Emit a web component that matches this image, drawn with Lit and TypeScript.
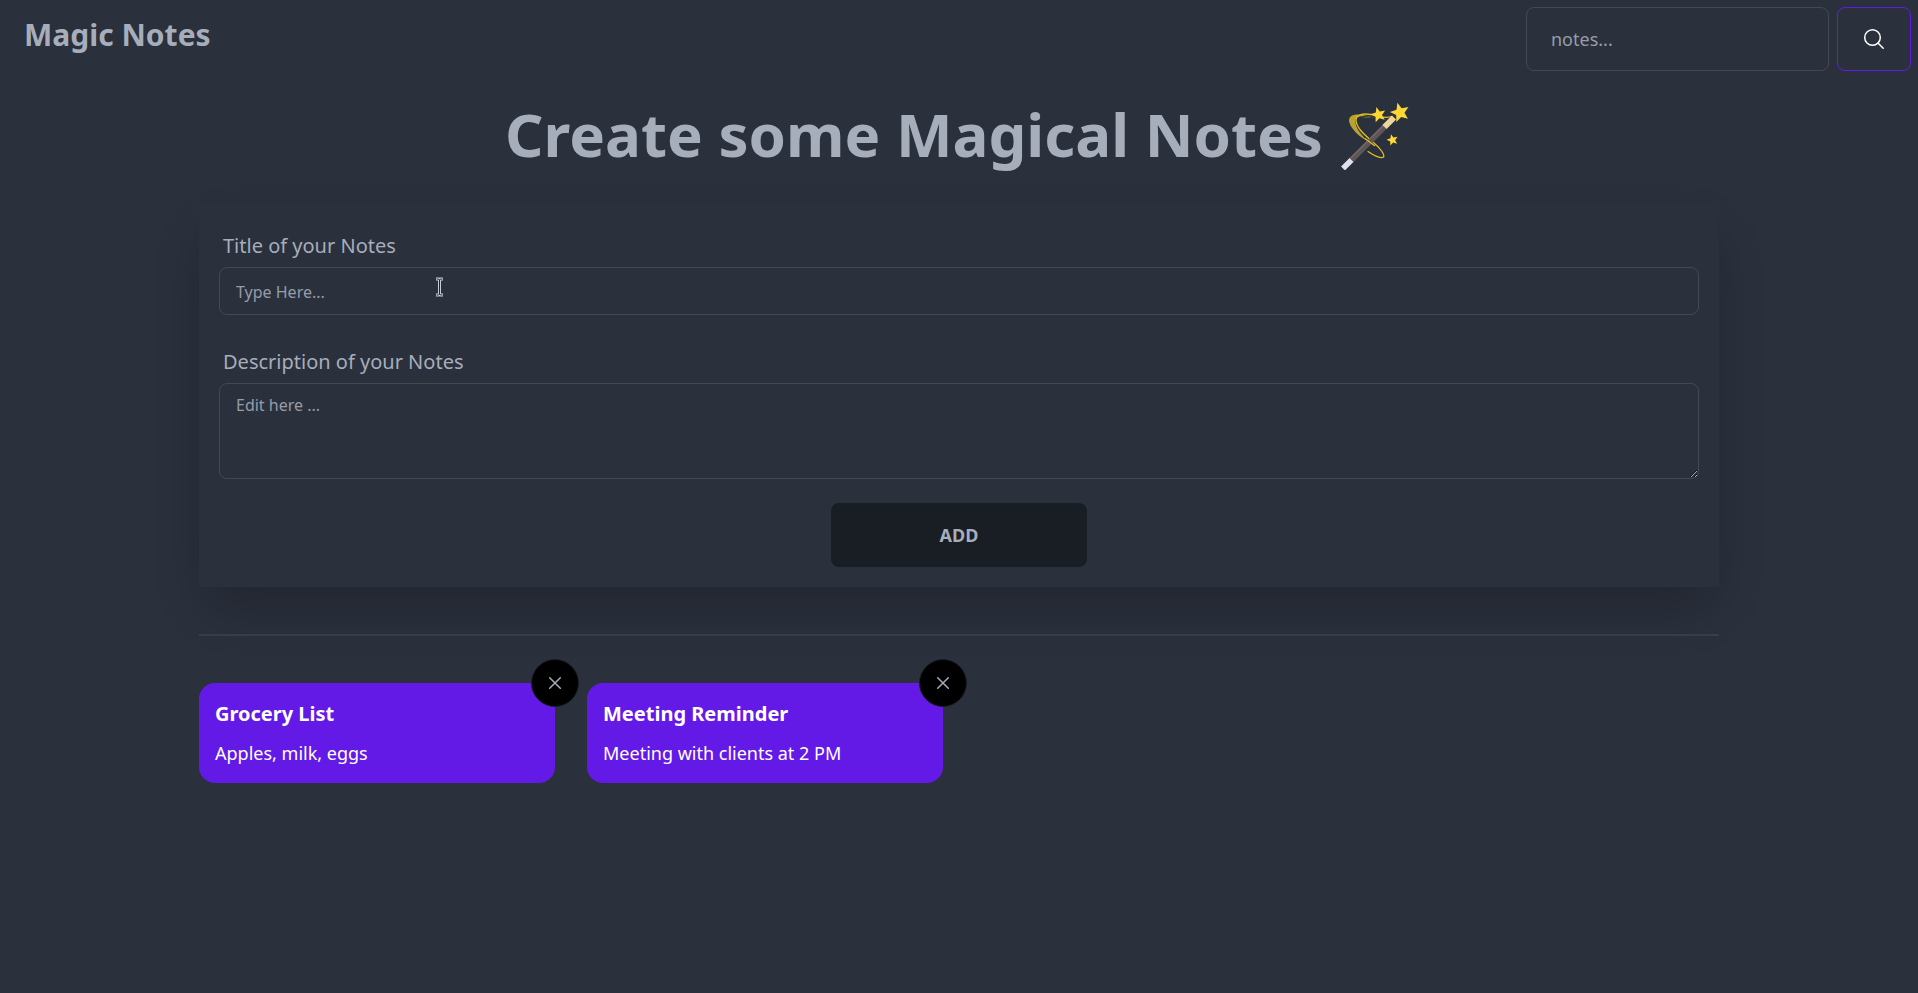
import { LitElement, html, css, svg } from "lit";
import { customElement, property, state } from "lit/decorators.js";

interface Note {
  title: string;
  body: string;
}

const star = "M-3.1-8.500L1.100-3.800L7.100-5.500L4-.1L7.500 5L1.400 3.800L-2.500 8.700L-3.200 2.500L-9 .3L-3.300-2.200Z";

const wand = html`
  <svg class="wand" viewBox="4 0 74 72" fill="none" role="img" aria-label="Magic wand">
    <path d="M40 20C32 20 25 18 22 20C18 23 23 33 33 43C25 40 15 30 14 23C14 15 24 15 40 20Z" fill="#b9a32f" />
    <path d="M41 21C31 17 22 18 21 22C20 30 27 37 34 44" stroke="#2a303c" stroke-width="1" />
    <path d="M57 18.500C49 21 45 18 36 16.500C27 15 21 17 21 22C21 30 31 38 39 45C46 51 50 57 48.500 59C46 61 38 57 33 53.500" stroke="#e2bd25" stroke-width="1.300" stroke-linecap="round" />
    <path d="M8 70.500L17 61.500" stroke="#dfe1ee" stroke-width="5.500" />
    <path d="M16.500 62L50 28.500" stroke="#5d5654" stroke-width="5.500" />
    <path d="M15.800 60L49 27" stroke="#746b66" stroke-width="1.200" />
    <path d="M49.500 29L59 19.500" stroke="#ecd69b" stroke-width="6" />
    <path d="M30 40.500L40 48" stroke="#e2bd25" stroke-width="1.200" />
    ${[
      [65, 14.5, 1.12],
      [43.5, 16.8, 0.88],
      [57.5, 42, 0.66],
    ].map(([x, y, k]) => svg`<path d=${star} fill="#fdd835" transform="translate(${x} ${y}) rotate(5) scale(${k})" />`)}
  </svg>
`;

@customElement("note-card")
export class NoteCard extends LitElement {
  @property() heading = "";
  @property() body = "";

  static styles = css`
    :host { display: block; position: relative; }
    .card { background: #641ae6; color: #fff; border-radius: 16px; padding: 16px; display: grid; gap: 10px; }
    .title { margin: 0; font-size: 20px; line-height: 30px; font-weight: 700; }
    .text { margin: 0; font-size: 18px; line-height: 28px; }
    .close {
      position: absolute; top: 0; right: 0; transform: translate(50%, -50%);
      box-sizing: border-box; width: 48px; height: 48px; padding: 0;
      display: grid; place-items: center; border-radius: 50%;
      border: 1px solid #191d24; background: #000; color: #a6adbb; cursor: pointer;
    }
    .x { width: 14px; height: 14px; }
  `;

  private remove() {
    this.dispatchEvent(new CustomEvent("remove"));
  }

  render() {
    return html`
      <article class="card">
        <h2 class="title">${this.heading}</h2>
        <p class="text">${this.body}</p>
      </article>
      <button class="close" type="button" aria-label="Delete note" @click=${this.remove}>
        <svg class="x" viewBox="0 0 14 14" fill="none" stroke="currentColor" stroke-width="1.500" stroke-linecap="round">
          <path d="M1.700 1.700l10.600 10.600M12.300 1.700l-10.600 10.600" />
        </svg>
      </button>
    `;
  }
}

@customElement("app-root")
export class AppRoot extends LitElement {
  @state() private notes: Note[] = [
    { title: "Grocery List", body: "Apples, milk, eggs" },
    { title: "Meeting Reminder", body: "Meeting with clients at 2 PM" },
  ];

  static styles = css`
    :host {
      display: block; min-height: 100vh; background: #2a303c; color: #a6adbb;
      font-family: "Noto Sans", sans-serif; font-size: 16px; line-height: 24px;
    }
    .nav { display: flex; justify-content: space-between; padding: 7px; }
    .brand { margin: 10px 17px; font-size: 30px; line-height: 36px; font-weight: 700; }
    .search { display: flex; gap: 8px; }
    input, textarea, button { font: inherit; color: inherit; box-sizing: border-box; }
    .field { display: block; width: 100%; margin: 0; background: transparent; border: 1px solid #434852; border-radius: 8px; }
    .field::placeholder { color: #969da9; opacity: 1; }
    .query { width: 303px; height: 64px; padding: 0 24px; font-size: 18px; line-height: 28px; }
    .go {
      height: 64px; padding: 0 24px; border: 1px solid #641ae6; border-radius: 8px;
      background: transparent; color: #fff; display: grid; place-items: center; cursor: pointer;
    }
    .lens { width: 24px; height: 24px; }
    .hero {
      height: 60px; margin: 26px 8px 39px; display: flex; justify-content: center; align-items: center; gap: 16px;
      font-size: 60px; line-height: 60px; font-weight: 700;
    }
    .wand { width: 74px; height: 72px; flex: none; }
    .page { max-width: 1520px; margin: 0 auto; padding: 0 8px; }
    .form { padding: 20px; box-shadow: 0 25px 50px -12px rgba(0, 0, 0, 0.25); display: flex; flex-direction: column; gap: 24px; }
    .label { display: block; padding: 8px 4px 6px; font-size: 20px; line-height: 30px; }
    .control { position: relative; }
    .title { height: 48px; padding: 1px 16px 0; }
    .pointer { position: absolute; left: 216px; top: 10px; width: 9px; height: 20px; pointer-events: none; }
    .desc { height: 96px; padding: 9px 16px 8px; resize: vertical; }
    .add {
      align-self: center; width: 256px; height: 64px; border: 0; border-radius: 8px;
      background: #191d24; font-size: 18px; font-weight: 700; cursor: pointer;
    }
    .rule { height: 2px; border: 0; margin: 47px 0; background: #373d49; }
    .notes { display: grid; grid-template-columns: repeat(4, minmax(0, 1fr)); gap: 32px; }
  `;

  private add(e: Event) {
    e.preventDefault();
    const form = e.target as HTMLFormElement;
    const data = new FormData(form);
    this.notes = [...this.notes, { title: String(data.get("title")), body: String(data.get("desc")) }];
    form.reset();
  }

  private remove(note: Note) {
    this.notes = this.notes.filter((n) => n !== note);
  }

  render() {
    return html`
      <header class="nav">
        <div class="brand">Magic Notes</div>
        <form class="search" role="search" @submit=${(e: Event) => e.preventDefault()}>
          <input class="field query" type="text" placeholder="notes..." aria-label="Search notes" />
          <button class="go" type="submit" aria-label="Search">
            <svg class="lens" viewBox="0 0 24 24" fill="none" stroke="currentColor" stroke-width="1.500" stroke-linecap="round">
              <circle cx="10.500" cy="10.500" r="7.800" /><path d="M16 16l5.200 5.200" />
            </svg>
          </button>
        </form>
      </header>
      <h1 class="hero"><span>Create some Magical Notes</span>${wand}</h1>
      <main class="page">
        <form class="form" @submit=${this.add}>
          <div>
            <label class="label" for="title">Title of your Notes</label>
            <div class="control">
              <input class="field title" id="title" name="title" type="text" placeholder="Type Here..." />
              <svg class="pointer" viewBox="0 0 9 20" fill="none" aria-hidden="true">
                <path d="M1 2h2.500l1 1l1-1H8M4.500 3v14M1 18h2.500l1-1l1 1H8" stroke="#c9cdd6" stroke-width="3" />
                <path d="M1.500 2h2l1 1l1-1h2M4.500 3v14M1.500 18h2l1-1l1 1h2" stroke="#20242d" stroke-width="1" />
              </svg>
            </div>
          </div>
          <div>
            <label class="label" for="desc">Description of your Notes</label>
            <textarea class="field desc" id="desc" name="desc" placeholder="Edit here ..."></textarea>
          </div>
          <button class="add" type="submit">ADD</button>
        </form>
        <hr class="rule" />
        <section class="notes">
          ${this.notes.map((n) => html`<note-card .heading=${n.title} .body=${n.body} @remove=${() => this.remove(n)}></note-card>`)}
        </section>
      </main>
    `;
  }
}
